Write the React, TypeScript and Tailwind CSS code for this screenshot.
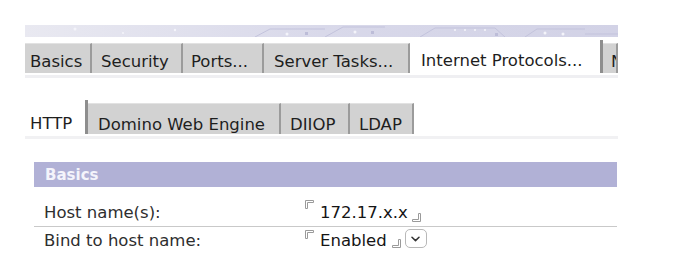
import React from "react";

const font = { fontFamily: '"DejaVu Sans", Verdana, sans-serif' };

type Tab = { label: string; w: string; pl: string; active?: boolean };

const topTabs: Tab[] = [
  { label: "Basics", w: "w-[67px]", pl: "pl-[5px]" },
  { label: "Security", w: "w-[91px]", pl: "pl-[9px]" },
  { label: "Ports...", w: "w-[81px]", pl: "pl-[8px]" },
  { label: "Server Tasks...", w: "w-[146px]", pl: "pl-[10px]" },
  { label: "Internet Protocols...", w: "w-[193px]", pl: "pl-[11px]", active: true },
  { label: "N", w: "w-[15px]", pl: "pl-[8px]" },
];

const subTabs: Tab[] = [
  { label: "HTTP", w: "w-[63px]", pl: "pl-[5px]", active: true },
  { label: "Domino Web Engine", w: "w-[193px]", pl: "pl-[10px]" },
  { label: "DIIOP", w: "w-[69px]", pl: "pl-[9px]" },
  { label: "LDAP", w: "w-[64px]", pl: "pl-[9px]" },
];

function TabRow({ tabs, rowH, tabH, textPt }: { tabs: Tab[]; rowH: string; tabH: string; textPt: string }) {
  return (
    <div className={`flex items-end overflow-hidden ${rowH}`}>
      {tabs.map((t) =>
        t.active ? (
          <div
            key={t.label}
            className={`${t.w} ${t.pl} h-full shrink-0 self-stretch whitespace-nowrap border-r-[3px] border-[#8e8e8e] bg-white pt-[3px] text-[#1e1e1e]`}
          >
            <div className={`${textPt} leading-[20px]`}>{t.label}</div>
          </div>
        ) : (
          <div
            key={t.label}
            className={`${t.w} ${t.pl} ${tabH} shrink-0 overflow-hidden whitespace-nowrap border-r-2 border-t border-[#9b9b9b] border-t-[#e2e2e2] bg-[#d2d2d2] text-[#1e1e1e]`}
          >
            <div className={`${textPt} leading-[20px]`}>{t.label}</div>
          </div>
        )
      )}
    </div>
  );
}

function CornerTL() {
  return (
    <svg width="9" height="9" viewBox="0 0 9 9" className="shrink-0">
      <path d="M0.5 0.5 H8.5 V2.5 H2.5 V8.5 H0.5 Z" fill="white" stroke="#9a9a9a" strokeWidth="1" />
    </svg>
  );
}

function CornerBR() {
  return (
    <svg width="9" height="9" viewBox="0 0 9 9" className="shrink-0">
      <path d="M8.5 8.5 H0.5 V6.5 H6.5 V0.5 H8.5 Z" fill="white" stroke="#9a9a9a" strokeWidth="1" />
    </svg>
  );
}

function Banner() {
  return (
    <div className="relative ml-[25px] h-[12px] w-[593px] overflow-hidden bg-gradient-to-r from-[#e9e9f1] via-[#d9d9ea] to-[#d2d2e6]">
      <svg width="593" height="12" viewBox="0 0 593 12" className="absolute left-0 top-0">
        <g stroke="#c3c3dc" strokeWidth="1" fill="none">
          <path d="M230 12 L245 4 H300" />
          <path d="M300 12 L318 2 H360" />
          <path d="M395 12 L410 3 H470 L480 12" />
          <path d="M500 12 L512 4 H560" />
          <path d="M560 9 H593" />
        </g>
        <g fill="#f4f4fa">
          <circle cx="50" cy="4" r="1.5" />
          <circle cx="98" cy="8" r="1" />
          <circle cx="150" cy="5" r="1.2" />
          <circle cx="262" cy="9" r="1.5" />
          <circle cx="330" cy="7" r="1.5" />
          <circle cx="430" cy="5" r="1" />
          <circle cx="440" cy="5" r="1" />
          <circle cx="450" cy="5" r="1" />
          <circle cx="460" cy="5" r="1" />
          <circle cx="520" cy="8" r="1.5" />
          <circle cx="538" cy="9" r="1.5" />
        </g>
        <g fill="#bdbdd8">
          <rect x="280" y="7" width="3" height="3" />
          <rect x="346" y="6" width="3" height="3" />
          <rect x="470" y="8" width="3" height="3" />
        </g>
      </svg>
    </div>
  );
}

export default function App() {
  return (
    <div className="h-[271px] w-[674px] overflow-hidden bg-white pt-[25px] text-[16.5px]" style={font}>
      <Banner />

      <div className="ml-[25px] mt-[3px] w-[593px]">
        <TabRow tabs={topTabs} rowH="h-[33px]" tabH="h-[30px]" textPt="pt-[8px]" />
        <div className="mt-[2px] h-[3px] bg-[#efeff2]" />
      </div>

      <div className="ml-[25px] mt-[22px] w-[593px]">
        <TabRow tabs={subTabs} rowH="h-[34px]" tabH="h-[31px]" textPt="pt-[11px]" />
        <div className="mt-[2px] h-[3px] w-[593px] bg-[#f1f1f3]" />
      </div>

      <div className="ml-[34px] mt-[23px] w-[583px]">
        <div className="flex h-[25px] items-center bg-[#b1b1d6] pl-[11px] text-[15px] font-bold leading-[20px] text-[#f4f4fb]">
          Basics
        </div>

        <div className="flex h-[40px] border-b border-[#c9c9c9] pt-[16px] leading-[20px]">
          <div className="w-[271px] shrink-0 pl-[10px] text-[#2e2e2e]">Host name(s):</div>
          <div className="-mt-[2px] flex items-start text-[#151515]">
            <div className="-mt-[1px]">
              <CornerTL />
            </div>
            <span className="ml-[6px] pt-[2px]">172.17.x.x</span>
            <div className="ml-[4px] mt-[12px]">
              <CornerBR />
            </div>
          </div>
        </div>

        <div className="flex h-[24px] leading-[20px]">
          <div className="w-[271px] shrink-0 pl-[10px] pt-[4px] text-[#2e2e2e]">Bind to host name:</div>
          <div className="flex items-start text-[#151515]">
            <div className="mt-[3px]">
              <CornerTL />
            </div>
            <span className="ml-[6px] pt-[4px]">Enabled</span>
            <div className="ml-[5px] mt-[12px]">
              <CornerBR />
            </div>
            <div className="ml-[4px] mt-[2px] flex h-[19px] w-[22px] items-center justify-center rounded-[5px] border border-[#b8b8b8] bg-white">
              <svg width="9" height="6" viewBox="0 0 9 6">
                <path d="M1 1.2 L4.5 4.6 L8 1.2" fill="none" stroke="#333" strokeWidth="1.5" strokeLinecap="round" strokeLinejoin="round" />
              </svg>
            </div>
          </div>
        </div>
      </div>
    </div>
  );
}
